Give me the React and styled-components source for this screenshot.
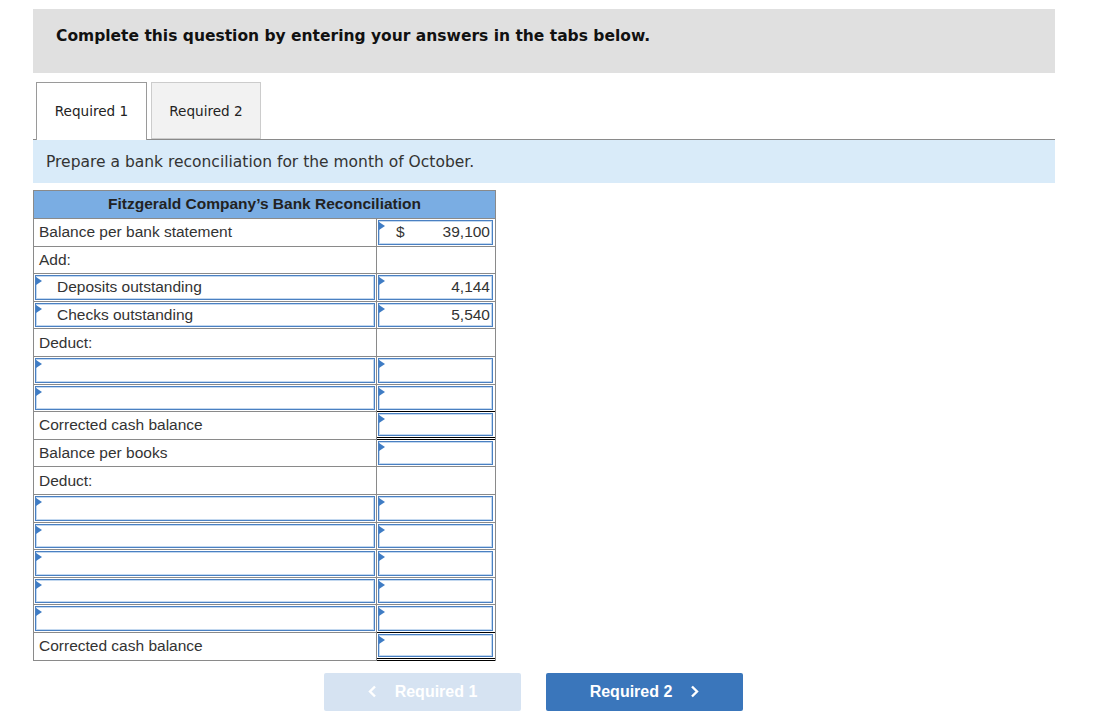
import React from "react";
import styled, { createGlobalStyle } from "styled-components";

const Global = createGlobalStyle`
  html, body { margin: 0; padding: 0; background: #fff; }
  body { font-family: "Liberation Sans", Arial, sans-serif; }
`;

const Page = styled.div`
  width: 1022px;
  padding: 9px 0 0 33px;
`;

const Banner = styled.div`
  height: 64px;
  background: #e0e0e0;
  box-sizing: border-box;
  padding: 18px 0 0 23px;
  font-family: "DejaVu Sans", Verdana, sans-serif;
  font-weight: bold;
  font-size: 15.5px;
  color: #111;
`;

const TabBar = styled.div`
  display: flex;
  gap: 4px;
  margin-top: 9px;
  padding-left: 3px;
  border-bottom: 1px solid #8a8a8a;
  height: 57px;
`;

const Tab = styled.div`
  display: flex;
  align-items: center;
  justify-content: center;
  box-sizing: border-box;
  height: ${(p) => (p.$active ? "58px" : "57px")};
  width: ${(p) => p.$w}px;
  font-family: "DejaVu Sans", Verdana, sans-serif;
  font-size: 13.6px;
  color: #222;
  background: ${(p) => (p.$active ? "#fff" : "#f2f2f2")};
  border: 1px solid ${(p) => (p.$active ? "#9a9a9a" : "#cccccc")};
  border-bottom: ${(p) => (p.$active ? "none" : "1px solid #cccccc")};
  padding-bottom: ${(p) => (p.$active ? "1px" : "0")};
`;

const Instruction = styled.div`
  height: 43px;
  display: flex;
  align-items: center;
  padding-left: 13px;
  background: #d9ebf9;
  font-family: "DejaVu Sans", Verdana, sans-serif;
  font-size: 15.5px;
  color: #333;
`;

const Table = styled.div`
  margin-top: 7px;
  width: 463px;
  box-sizing: border-box;
  border: 1px solid #8a8a8a;
  border-bottom: none;
  font-size: 15.5px;
  color: #333;
`;

const HeaderRow = styled.div`
  height: 26px;
  background: #7aade3;
  border-bottom: 1px solid #8a8a8a;
  display: flex;
  align-items: center;
  justify-content: center;
  font-weight: bold;
  color: #222;
  padding-bottom: 1px;
`;

const Row = styled.div`
  display: grid;
  grid-template-columns: 343px 118px;
  height: 27.6px;
`;

const LabelCell = styled.div`
  box-sizing: border-box;
  border-right: 1px solid #8a8a8a;
  border-bottom: 1px solid #8a8a8a;
  display: flex;
  align-items: ${(p) => (p.$boxed ? "stretch" : "center")};
  padding: ${(p) => (p.$boxed ? "1px" : "0 0 0 5px")};
  white-space: nowrap;
`;

const ValueCell = styled.div`
  box-sizing: border-box;
  border-bottom: ${(p) => (p.$total ? "3px double #000" : "1px solid #8a8a8a")};
  box-shadow: ${(p) => (p.$total ? "0 -1px 0 #000" : "none")};
  display: flex;
  align-items: stretch;
  padding: ${(p) => (p.$boxed ? "1px 2px 1px 1px" : "0")};
  position: relative;
`;

const InputBox = styled.div`
  position: relative;
  flex: 1;
  box-sizing: border-box;
  border: 1px solid #4a80c2;
  box-shadow: inset 0 0 0 1px #c3d8ef;
  background: #fff;
  display: flex;
  align-items: center;
  padding: 0 ${(p) => (p.$right ? "2px" : "0")} 0 ${(p) => p.$pl || 0}px;
  white-space: nowrap;
`;

const Marker = styled.span`
  position: absolute;
  left: 0;
  top: 1px;
  width: 0;
  height: 0;
  border-top: 4px solid transparent;
  border-bottom: 4px solid transparent;
  border-left: 6px solid #3f7cc4;
`;

const Dollar = styled.span`
  padding-left: 17px;
`;

const Amount = styled.span`
  margin-left: auto;
`;

const ButtonRow = styled.div`
  display: flex;
  gap: 25px;
  margin-top: 12px;
  padding-left: 291px;
`;

const NavButton = styled.div`
  width: 197px;
  height: 38px;
  border-radius: 2px;
  display: flex;
  align-items: center;
  justify-content: center;
  gap: 18px;
  font-family: "Liberation Sans", Arial, sans-serif;
  font-weight: bold;
  font-size: 16px;
  color: #fff;
  background: ${(p) => (p.$disabled ? "#d6e3f2" : "#3a76bb")};
`;

const Chevron = ({ dir }) => (
  <svg width="9" height="13" viewBox="0 0 9 13">
    <polyline
      points={dir === "left" ? "7,1.5 2,6.5 7,11.5" : "2,1.5 7,6.5 2,11.5"}
      fill="none"
      stroke="#fff"
      strokeWidth="2.4"
    />
  </svg>
);

const rows = [
  { label: "Balance per bank statement", value: true, dollar: true, amount: "39,100" },
  { label: "Add:" },
  { label: "Deposits outstanding", labelBox: true, value: true, amount: "4,144" },
  { label: "Checks outstanding", labelBox: true, value: true, amount: "5,540" },
  { label: "Deduct:" },
  { label: "", labelBox: true, value: true },
  { label: "", labelBox: true, value: true },
  { label: "Corrected cash balance", value: true, total: true },
  { label: "Balance per books", value: true },
  { label: "Deduct:" },
  { label: "", labelBox: true, value: true },
  { label: "", labelBox: true, value: true },
  { label: "", labelBox: true, value: true },
  { label: "", labelBox: true, value: true },
  { label: "", labelBox: true, value: true },
  { label: "Corrected cash balance", value: true, total: true },
];

export default function App() {
  return (
    <>
      <Global />
      <Page>
        <Banner>Complete this question by entering your answers in the tabs below.</Banner>
        <TabBar>
          <Tab $active $w={111}>Required 1</Tab>
          <Tab $w={110}>Required 2</Tab>
        </TabBar>
        <Instruction>Prepare a bank reconciliation for the month of October.</Instruction>
        <Table>
          <HeaderRow>Fitzgerald Company’s Bank Reconciliation</HeaderRow>
          {rows.map((r, i) => (
            <Row key={i}>
              <LabelCell $boxed={r.labelBox}>
                {r.labelBox ? (
                  <InputBox $pl={21}>
                    <Marker />
                    {r.label}
                  </InputBox>
                ) : (
                  r.label
                )}
              </LabelCell>
              <ValueCell $boxed={r.value} $total={r.total}>
                {r.value && (
                  <InputBox $right>
                    <Marker />
                    {r.dollar && <Dollar>$</Dollar>}
                    {r.amount && <Amount>{r.amount}</Amount>}
                  </InputBox>
                )}
              </ValueCell>
            </Row>
          ))}
        </Table>
        <ButtonRow>
          <NavButton $disabled>
            <Chevron dir="left" />
            <span>Required 1</span>
          </NavButton>
          <NavButton>
            <span>Required 2</span>
            <Chevron dir="right" />
          </NavButton>
        </ButtonRow>
      </Page>
    </>
  );
}
